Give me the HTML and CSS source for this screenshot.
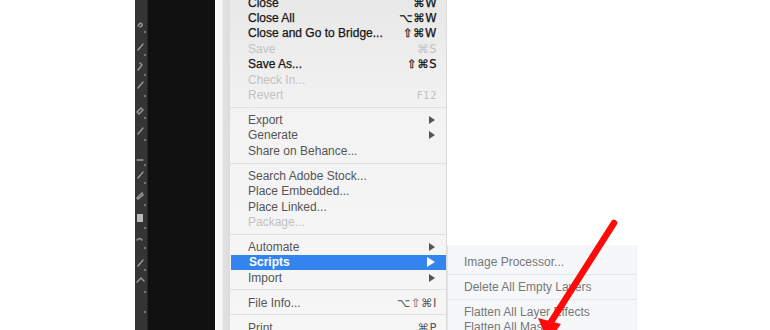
FILE: index.html
```html
<!DOCTYPE html>
<html lang="en">
<head>
    <meta charset="UTF-8">
    <title>File menu - Scripts</title>
    <link rel="stylesheet" href="styles.css">
</head>
<body>
    <div class="screen">
        <div class="gutter"></div>

        <!-- tools strip -->
        <div class="toolbar">
            <svg width="12" height="330" viewBox="0 0 12 330">
                <g stroke="#9a9a9a" stroke-width="1.4" fill="none" stroke-linecap="round">
                    <path d="M3 26 q2 -4 4 -2 q1 2 -2 3"/>
                    <path d="M3 50 l5 -6"/>
                    <path d="M3 70 l4 -5 M5 63 l2 2"/>
                    <path d="M3 88 l5 -6"/>
                    <path d="M2 112 l4 -4 l2 2 l-4 4 z"/>
                    <path d="M3 134 l5 -6"/>
                    <path d="M2 160 h6"/>
                    <path d="M3 178 l5 -6"/>
                    <path d="M2 198 l5 -5 l1 2 l-5 4 z"/>
                    <path d="M2 240 q3 -3 5 0"/>
                    <path d="M3 266 l5 -6"/>
                    <path d="M2 282 l4 -4 l3 3"/>
                </g>
                <rect x="2" y="214" width="6" height="8" fill="#bbbbbb"/>
                <g fill="#8a8a8a">
                    <circle cx="10" cy="32" r="1"/>
                    <circle cx="10" cy="55" r="1"/>
                    <circle cx="10" cy="75" r="1"/>
                    <circle cx="10" cy="96" r="1"/>
                    <circle cx="10" cy="118" r="1"/>
                    <circle cx="10" cy="140" r="1"/>
                    <circle cx="10" cy="165" r="1"/>
                    <circle cx="10" cy="183" r="1"/>
                    <circle cx="10" cy="205" r="1"/>
                    <circle cx="10" cy="228" r="1"/>
                    <circle cx="10" cy="248" r="1"/>
                    <circle cx="10" cy="270" r="1"/>
                    <circle cx="10" cy="292" r="1"/>
                    <circle cx="10" cy="312" r="1"/>
                </g>
            </svg>
        </div>

        <div class="panel"></div>
        <div class="edge"></div>

        <!-- File menu -->
        <div class="menu">
            <ul class="menu-list">
                <li class="item strong"><span>Close</span><span class="key">⌘W</span></li>
                <li class="item strong"><span>Close All</span><span class="key">⌥⌘W</span></li>
                <li class="item strong"><span>Close and Go to Bridge...</span><span class="key">⇧⌘W</span></li>
                <li class="item disabled"><span>Save</span><span class="key">⌘S</span></li>
                <li class="item strong"><span>Save As...</span><span class="key">⇧⌘S</span></li>
                <li class="item disabled"><span>Check In...</span></li>
                <li class="item disabled"><span>Revert</span><span class="key small">F12</span></li>
                <li class="sep"></li>
                <li class="item"><span>Export</span><span class="arrow"></span></li>
                <li class="item"><span>Generate</span><span class="arrow"></span></li>
                <li class="item"><span>Share on Behance...</span></li>
                <li class="sep"></li>
                <li class="item"><span>Search Adobe Stock...</span></li>
                <li class="item"><span>Place Embedded...</span></li>
                <li class="item"><span>Place Linked...</span></li>
                <li class="item disabled"><span>Package...</span></li>
                <li class="sep"></li>
                <li class="item"><span>Automate</span><span class="arrow"></span></li>
                <li class="item active"><span>Scripts</span><span class="arrow"></span></li>
                <li class="item"><span>Import</span><span class="arrow"></span></li>
                <li class="sep"></li>
                <li class="item"><span>File Info...</span><span class="key">⌥⇧⌘I</span></li>
                <li class="sep"></li>
                <li class="item"><span>Print</span><span class="key">⌘P</span></li>
            </ul>
        </div>

        <!-- Scripts submenu -->
        <div class="side">
            <ul class="submenu">
                <li class="sub-item">Image Processor...</li>
                <li class="sub-sep"></li>
                <li class="sub-item">Delete All Empty Layers</li>
                <li class="sub-sep"></li>
                <li class="sub-item">Flatten All Layer Effects</li>
                <li class="sub-item">Flatten All Masks</li>
            </ul>
        </div>
    </div>

    <!-- red annotation arrow -->
    <svg class="annotation" width="770" height="330" viewBox="0 0 770 330">
        <line x1="614" y1="223" x2="551" y2="322" stroke="#ff0a0a" stroke-width="6.5" stroke-linecap="round"/>
        <polygon points="538,318 561,324 548,342" fill="#ff0a0a"/>
    </svg>
</body>
</html>
```

FILE: styles.css
```css
body {
    margin: 0;
    background: #ffffff;
    font-family: "Liberation Sans", Arial, "DejaVu Sans", sans-serif;
    font-size: 12px;
    overflow: hidden;
}

.screen {
    display: flex;
    width: 770px;
    height: 330px;
    overflow: hidden;
}

.gutter {
    width: 135px;
    flex: none;
    background: #ffffff;
}

.toolbar {
    width: 12px;
    flex: none;
    background: #353535;
    border-right: 1px solid #262626;
}

.toolbar svg {
    display: block;
}

.panel {
    width: 67px;
    flex: none;
    background: #111111;
}

/* light frame to the left of the menu */
.edge {
    width: 15px;
    flex: none;
    background: linear-gradient(to right, #fbfbfb 0, #f6f6f6 45%, #e2e2e2 55%, #dcdcdc 100%);
}

/* File menu */
.menu {
    width: 216px;
    flex: none;
    background: linear-gradient(to bottom, #e8e8e8 0, #f3f3f3 35%, #f6f6f6 100%);
    border-right: 1px solid #dadada;
}

.menu-list {
    list-style: none;
    margin: -5px 0 0;
    padding: 0;
}

.item {
    display: flex;
    align-items: center;
    justify-content: space-between;
    height: 15.4px;
    padding: 0 9px 0 18px;
    color: #555555;
    white-space: nowrap;
}

.item.strong {
    color: #151515;
    -webkit-text-stroke: 0.25px #151515;
}

.item.disabled {
    color: #c2c2c2;
}

.item.active {
    background: #3384ee;
    color: #ffffff;
    font-weight: bold;
    margin-left: 1px;
}

.key {
    font-family: "DejaVu Sans", "Liberation Sans", sans-serif;
    font-size: 11.5px;
    letter-spacing: 0.5px;
}

.key.small {
    font-size: 10px;
}

.arrow {
    width: 0;
    height: 0;
    margin-right: 2px;
    border-top: 4px solid transparent;
    border-bottom: 4px solid transparent;
    border-left: 6px solid #555555;
}

.item.active .arrow {
    border-top-width: 5px;
    border-bottom-width: 5px;
    border-left: 8px solid #ffffff;
}

/* group divider: thin line in the middle of a short gap */
.sep {
    height: 9.6px;
    background: linear-gradient(to bottom, transparent 4px, #e0e0e0 4px, #e0e0e0 5px, transparent 5px);
}

/* Scripts submenu */
.side {
    flex: none;
    padding-top: 245px;
}

.submenu {
    list-style: none;
    margin: 0;
    padding: 10px 0 0;
    width: 188px;
    height: 100px;
    background: #f5f7f9;
    border-left: 1px solid #e4e4e4;
    border-right: 1px solid #eceff1;
}

.sub-item {
    height: 15.4px;
    line-height: 15.4px;
    padding-left: 16px;
    color: #777777;
    white-space: nowrap;
}

.sub-sep {
    height: 9.6px;
    background: linear-gradient(to bottom, transparent 4px, #e3e7ea 4px, #e3e7ea 5px, transparent 5px);
}

.annotation {
    position: absolute;
    left: 0;
    top: 0;
    pointer-events: none;
}
```
